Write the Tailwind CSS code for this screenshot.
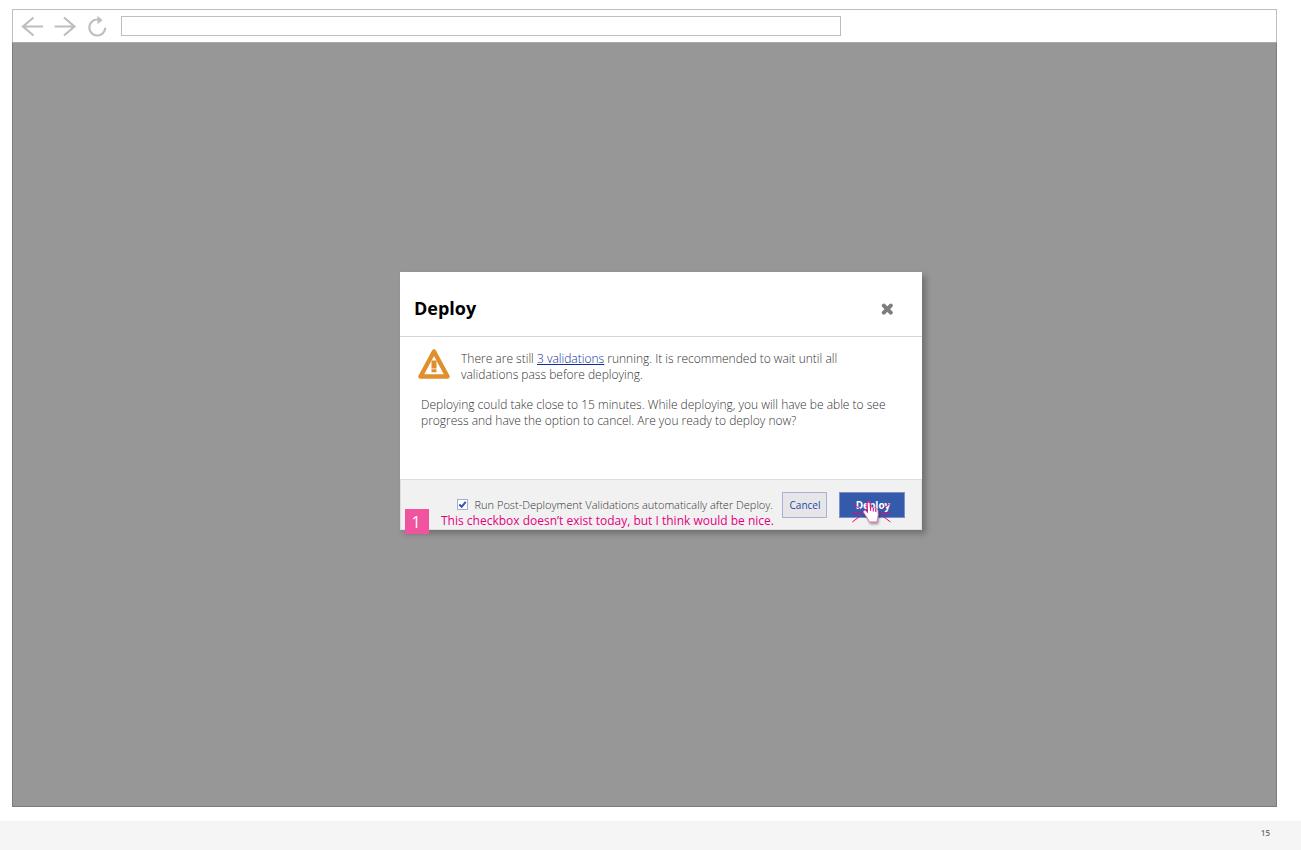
<!DOCTYPE html>
<html lang="en">
<head>
<meta charset="utf-8">
<meta name="viewport" content="width=device-width, initial-scale=1">
<title>Deploy</title>
<script src="https://cdn.jsdelivr.net/npm/@tailwindcss/browser@4"></script>
</head>
<body class="flex min-h-screen flex-col bg-white font-['Open_Sans',sans-serif]">
  <main class="mt-[9px] mr-6 mb-[14px] ml-3 flex grow flex-col">
    <!-- browser toolbar -->
    <header class="flex h-[33px] items-center border border-b-0 border-[#bdbdbd] bg-white pl-2">
      <button type="button" aria-label="Back" class="h-6 w-6">
        <svg viewBox="0 0 24 24" class="h-6 w-6" fill="none" stroke="#bebebe" stroke-width="2.2"><path d="M22 12.500H2M12.500 3.500 2 12.500l10.500 9"/></svg>
      </button>
      <button type="button" aria-label="Forward" class="ml-2 h-6 w-6">
        <svg viewBox="0 0 24 24" class="h-6 w-6" fill="none" stroke="#bebebe" stroke-width="2.2"><path d="M1.500 12.500h19.500M11 3.500 21.500 12.500l-10.500 9"/></svg>
      </button>
      <button type="button" aria-label="Reload" class="ml-2 h-6 w-6">
        <svg viewBox="0 0 24 24" class="h-6 w-6" fill="none" stroke="#bebebe" stroke-width="2.2"><path d="M13 5.500h-1a8 8 0 1 0 8.300 8.200"/><path d="M12.500 1.800 17.500 6.300 12.500 10.300z" fill="#bebebe" stroke="none"/></svg>
      </button>
      <input type="text" aria-label="Address" class="ml-3 h-5 w-[720px] border border-[#bdbdbd] bg-white px-2 text-xs outline-none">
    </header>

    <!-- dimmed page -->
    <div class="flex grow items-start justify-center border border-[#7c7c7c] border-t-[#a9a9a9] bg-[#979797] pt-[229px] pl-[33px]">
      <section role="dialog" aria-labelledby="title" class="relative w-[522px] bg-white shadow-[4px_4px_6px_rgba(0,0,0,0.25)]">
        <div class="flex h-[65px] items-center justify-between border-b border-[#d6d6d6] pt-2 pr-7 pl-[14px]">
          <h1 id="title" class="text-lg font-bold text-black">Deploy</h1>
          <button type="button" aria-label="Close" class="h-[14px] w-[14px]">
            <svg viewBox="0 0 14 14" class="h-[14px] w-[14px]" stroke="#7d7d7f" stroke-width="4" stroke-linecap="round"><path d="M3.800 4.600l7 7M10.800 4.600l-7 7"/></svg>
          </button>
        </div>

        <div class="h-[142px] pt-[14px] pr-[18px] pl-[18px] text-xs leading-4 font-light text-[#333333]">
          <div class="flex h-[30px]">
            <svg viewBox="0 0 32 30" class="-mt-[2px] h-[30px] w-8 shrink-0" aria-hidden="true">
              <path d="M16 2.500 2.500 27.500h27z" fill="none" stroke="#e08f2c" stroke-width="4.400" stroke-linejoin="round"/>
              <path d="M13.500 11.500h5v8h-5zM13.500 20.300h5v3h-5z" fill="#e08f2c"/>
            </svg>
            <p class="ml-[11px] w-[400px]">There are still <a href="#" class="text-[#0c2f96] underline">3 validations</a> running. It is recommended to wait until all validations pass before deploying.</p>
          </div>
          <p class="mt-4 ml-[3px]">Deploying could take close to 15 minutes. While deploying, you will have be able to see progress and have the option to cancel. Are you ready to deploy now?</p>
        </div>

        <div class="flex h-[51px] items-center justify-end border border-[#dedede] bg-[#f1f1f1] pr-4">
          <span class="grid h-[11px] w-[11px]">
            <input id="post" type="checkbox" checked class="col-start-1 row-start-1 h-[11px] w-[11px] appearance-none border border-[#a5afd6] bg-white">
            <svg viewBox="0 0 11 11" class="pointer-events-none col-start-1 row-start-1 h-[11px] w-[11px]" fill="none" stroke="#3357ab" stroke-width="2" aria-hidden="true"><path d="M2.300 5.500 4.700 7.800 8.700 2.800"/></svg>
          </span>
          <label for="post" class="ml-[7px] text-[11px] leading-4 font-light text-[#333333]">Run Post-Deployment Validations automatically after Deploy.</label>
          <button type="button" class="ml-[9px] h-[26px] w-[45px] border border-[#a9b1d8] bg-[#e6e6e8] pt-px pl-px text-[10px] text-[#2247a3]">Cancel</button>
          <button type="button" class="ml-3 h-[26px] w-[66px] border border-[#7f8ec6] bg-[#335aab] pt-px pl-[2px] text-[10px] font-bold text-white">Deploy</button>
        </div>

        <!-- review note -->
        <span class="absolute -bottom-[4px] left-[5px] flex h-[25px] w-6 items-center justify-center bg-[#f0549f] pr-[2px] text-base font-medium text-white">1</span>
        <p class="absolute bottom-[1px] left-[41px] text-xs leading-4 whitespace-nowrap text-[#e5007f]">This checkbox doesn’t exist today, but I think would be nice.</p>

        <!-- click marker -->
        <svg viewBox="0 0 44 34" class="pointer-events-none absolute right-[30px] bottom-[2px] h-[34px] w-11 overflow-visible" fill="none" aria-hidden="true">
          <path d="M4.300 9.300l8 6M4.300 18.500h10M4.300 28l8-6M42.500 9.300l-8 6M42.500 18.500h-10M42.500 28l-8-6" stroke="#e5097f"/>
          <path d="M19 9.500c0-2.200 3.200-2.200 3.200 0l.3 4.500c.7-1 2.200-.8 2.600.2.800-.7 2.200-.3 2.500.8 1-.4 2.300.2 2.400 1.400l.2 4.500c0 2-1 3.500-1.200 7h-7.800c-.4-2.300-2-3.900-3.200-5.700l-2.200-3.500c-.9-1.700.9-3 2.300-1.700l1.400 1.600z" fill="#fff" stroke="#f26bae" stroke-width=".9" class="drop-shadow-[1px_2px_1px_rgba(0,0,0,0.35)]"/>
          <path d="M19.400 18.500 19 9.500c0-2.200 3.200-2.200 3.200 0l.4 7.300M25.300 14v3.500M27.800 15v3" stroke="#e5097f" stroke-width="1.100"/>
        </svg>
      </section>
    </div>
  </main>

  <footer class="flex h-[29px] items-center justify-end bg-[#f5f5f5] pr-[31px] pb-[5px] text-[8px] font-semibold text-[#707070]">15</footer>
</body>
</html>
